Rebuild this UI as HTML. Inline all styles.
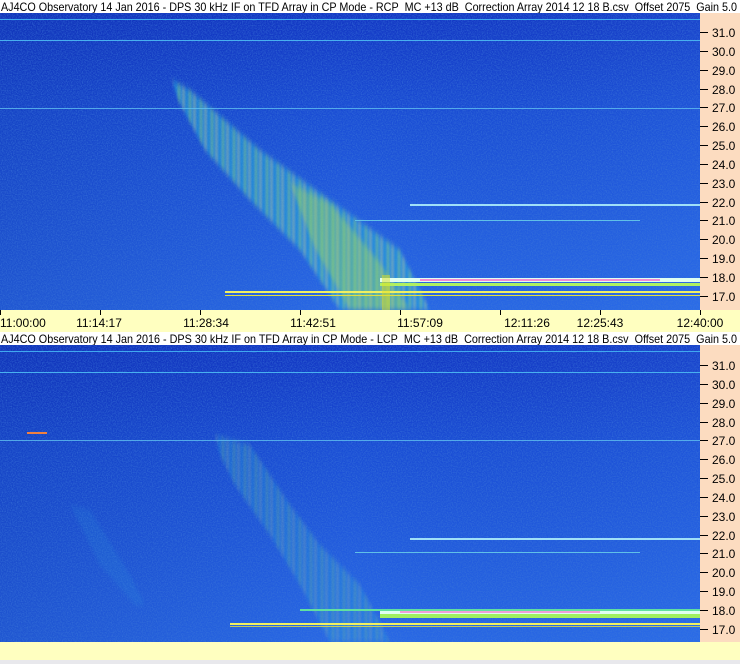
<!DOCTYPE html>
<html><head><meta charset="utf-8"><style>
html,body{margin:0;padding:0;width:740px;height:664px;overflow:hidden;background:#e8e8ec;font-family:"Liberation Sans",sans-serif}
svg{position:absolute;left:0;top:0;display:block}
</style></head><body>
<svg width="740" height="664">
<defs>
<linearGradient id="bg" x1="0" y1="0" x2="0" y2="1">
<stop offset="0" stop-color="#1236c4"/><stop offset="0.35" stop-color="#1a4ed6"/><stop offset="1" stop-color="#2868e6"/></linearGradient>
<linearGradient id="bgh" x1="0" y1="0" x2="1" y2="0">
<stop offset="0" stop-color="#0a2aa0" stop-opacity="0.3"/><stop offset="0.5" stop-color="#0a2aa0" stop-opacity="0"/><stop offset="1" stop-color="#3a80f0" stop-opacity="0.15"/></linearGradient>
<filter id="n" x="0" y="0" width="1" height="1"><feTurbulence type="fractalNoise" baseFrequency="0.8" numOctaves="2" seed="3"/><feColorMatrix values="0 0 0 0 0.05  0 0 0 0 0.2  0 0 0 0 0.7  0 0 0 1.2 -0.45"/></filter>
<pattern id="st" width="11" height="10" patternUnits="userSpaceOnUse"><rect width="11" height="10" fill="#28a8d8"/><rect x="2" width="2" height="10" fill="#80e070"/><rect x="7" width="1" height="10" fill="#c8f040"/></pattern>
<filter id="b"><feGaussianBlur stdDeviation="1 3"/></filter>
</defs>
<rect x="0" y="0" width="740" height="13" fill="#fff"/>
<text x="1" y="11" font-size="12" textLength="736" lengthAdjust="spacingAndGlyphs" font-family="Liberation Sans, sans-serif">AJ4CO Observatory 14 Jan 2016 - DPS 30 kHz IF on TFD Array in CP Mode - RCP&#160; MC +13 dB&#160; Correction Array 2014 12 18 B.csv&#160; Offset 2075&#160; Gain 5.0</text>
<rect x="0" y="332" width="740" height="13" fill="#fff"/>
<text x="1" y="343" font-size="12" textLength="736" lengthAdjust="spacingAndGlyphs" font-family="Liberation Sans, sans-serif">AJ4CO Observatory 14 Jan 2016 - DPS 30 kHz IF on TFD Array in CP Mode - LCP&#160; MC +13 dB&#160; Correction Array 2014 12 18 B.csv&#160; Offset 2075&#160; Gain 5.0</text>
<!-- panel 1 -->
<g transform="translate(0,13)">
<rect width="700" height="297" fill="url(#bg)"/><rect width="700" height="297" fill="url(#bgh)"/>
<rect width="700" height="297" filter="url(#n)"/>
<polygon points="172,67 190,77 260,137 330,187 400,237 430,297 340,297 300,237 250,187 205,137 178,87" fill="url(#st)" opacity="0.6" filter="url(#b)"/>
<polygon points="290,170 330,190 380,250 410,297 350,297 315,235" fill="#b8f040" opacity="0.3" filter="url(#b)"/>
<rect x="0" y="6" width="700" height="1" fill="#40a8f0"/>
<rect x="0" y="27" width="700" height="1" fill="#48b0f0"/>
<rect x="0" y="95" width="700" height="1" fill="#60c0f0" opacity="0.8"/>
<rect x="410" y="191" width="290" height="2" fill="#a0e0f8"/>
<rect x="355" y="207" width="285" height="1" fill="#60c0e8"/>
<rect x="380" y="265" width="320" height="4" fill="#e0fff0"/>
<rect x="420" y="266" width="240" height="2" fill="#ff40c0" opacity="0.6"/>
<rect x="380" y="270" width="320" height="3" fill="#b0f060"/>
<rect x="225" y="278" width="475" height="2" fill="#f0f060"/>
<rect x="225" y="282" width="475" height="1" fill="#e0e040"/>
<rect x="382" y="262" width="8" height="35" fill="#e0e020" opacity="0.5"/>
</g>
<!-- panel 2 -->
<g transform="translate(0,345)">
<rect width="700" height="297" fill="url(#bg)"/><rect width="700" height="297" fill="url(#bgh)"/>
<rect width="700" height="297" filter="url(#n)"/>
<polygon points="215,90 250,100 290,160 320,200 360,240 390,297 330,297 300,240 270,190 235,140 220,110" fill="url(#st)" opacity="0.3" filter="url(#b)"/>
<polygon points="70,160 90,165 130,230 145,260 135,260 100,220" fill="#30b0e0" opacity="0.12" filter="url(#b)"/>
<rect x="0" y="6" width="700" height="1" fill="#40a8f0"/>
<rect x="0" y="27" width="700" height="1" fill="#48b0f0"/>
<rect x="0" y="95" width="700" height="1" fill="#60c0f0" opacity="0.8"/>
<rect x="27" y="87" width="20" height="2" fill="#f08040"/>
<rect x="410" y="193" width="290" height="2" fill="#a0e0f8"/>
<rect x="355" y="207" width="285" height="1" fill="#60c0e8"/>
<rect x="300" y="264" width="400" height="2" fill="#60e0a0"/>
<rect x="380" y="266" width="320" height="3" fill="#e0fff0"/>
<rect x="400" y="266" width="200" height="2" fill="#ff40c0" opacity="0.5"/>
<rect x="380" y="269" width="320" height="4" fill="#a0f060"/>
<rect x="230" y="278" width="470" height="2" fill="#f0f060"/>
<rect x="230" y="281" width="470" height="1" fill="#e0e040" opacity="0.8"/>
</g>
<!-- axes -->
<rect x="700" y="13" width="40" height="297" fill="#fcdcc0"/>
<rect x="700" y="345" width="40" height="297" fill="#fcdcc0"/>
<rect x="0" y="310" width="740" height="22" fill="#ffffc0"/>
<rect x="0" y="642" width="740" height="18" fill="#ffffc0"/>
<g stroke="#000" stroke-width="1">
<line x1="0.5" y1="310" x2="0.5" y2="315"/><line x1="100.5" y1="310" x2="100.5" y2="315"/><line x1="200.5" y1="310" x2="200.5" y2="315"/><line x1="300.5" y1="310" x2="300.5" y2="315"/><line x1="400.5" y1="310" x2="400.5" y2="315"/><line x1="500.5" y1="310" x2="500.5" y2="315"/><line x1="600.5" y1="310" x2="600.5" y2="315"/><line x1="700.5" y1="310" x2="700.5" y2="315"/>
</g>
<g font-size="12" fill="#000" font-family="Liberation Sans, sans-serif">
<text x="0" y="327">11:00:00</text>
<text x="99" y="327" text-anchor="middle">11:14:17</text>
<text x="206" y="327" text-anchor="middle">11:28:34</text>
<text x="313" y="327" text-anchor="middle">11:42:51</text>
<text x="420" y="327" text-anchor="middle">11:57:09</text>
<text x="527" y="327" text-anchor="middle">12:11:26</text>
<text x="600" y="327" text-anchor="middle">12:25:43</text>
<text x="700" y="327" text-anchor="middle">12:40:00</text>
</g>
<g font-size="12" fill="#000" font-family="Liberation Sans, sans-serif">
<g>
<line x1="700" y1="32.5" x2="708" y2="32.5" stroke="#000"/><text x="712" y="37">31.0</text>
<line x1="700" y1="51.5" x2="708" y2="51.5" stroke="#000"/><text x="712" y="56">30.0</text>
<line x1="700" y1="70.5" x2="708" y2="70.5" stroke="#000"/><text x="712" y="75">29.0</text>
<line x1="700" y1="89.5" x2="708" y2="89.5" stroke="#000"/><text x="712" y="94">28.0</text>
<line x1="700" y1="107.5" x2="708" y2="107.5" stroke="#000"/><text x="712" y="112">27.0</text>
<line x1="700" y1="126.5" x2="708" y2="126.5" stroke="#000"/><text x="712" y="131">26.0</text>
<line x1="700" y1="145.5" x2="708" y2="145.5" stroke="#000"/><text x="712" y="150">25.0</text>
<line x1="700" y1="164.5" x2="708" y2="164.5" stroke="#000"/><text x="712" y="169">24.0</text>
<line x1="700" y1="183.5" x2="708" y2="183.5" stroke="#000"/><text x="712" y="188">23.0</text>
<line x1="700" y1="202.5" x2="708" y2="202.5" stroke="#000"/><text x="712" y="207">22.0</text>
<line x1="700" y1="220.5" x2="708" y2="220.5" stroke="#000"/><text x="712" y="225">21.0</text>
<line x1="700" y1="239.5" x2="708" y2="239.5" stroke="#000"/><text x="712" y="244">20.0</text>
<line x1="700" y1="258.5" x2="708" y2="258.5" stroke="#000"/><text x="712" y="263">19.0</text>
<line x1="700" y1="277.5" x2="708" y2="277.5" stroke="#000"/><text x="712" y="282">18.0</text>
<line x1="700" y1="296.5" x2="708" y2="296.5" stroke="#000"/><text x="712" y="301">17.0</text>
</g>
<g transform="translate(0,333)">
<line x1="700" y1="32.5" x2="708" y2="32.5" stroke="#000"/><text x="712" y="37">31.0</text>
<line x1="700" y1="51.5" x2="708" y2="51.5" stroke="#000"/><text x="712" y="56">30.0</text>
<line x1="700" y1="70.5" x2="708" y2="70.5" stroke="#000"/><text x="712" y="75">29.0</text>
<line x1="700" y1="89.5" x2="708" y2="89.5" stroke="#000"/><text x="712" y="94">28.0</text>
<line x1="700" y1="107.5" x2="708" y2="107.5" stroke="#000"/><text x="712" y="112">27.0</text>
<line x1="700" y1="126.5" x2="708" y2="126.5" stroke="#000"/><text x="712" y="131">26.0</text>
<line x1="700" y1="145.5" x2="708" y2="145.5" stroke="#000"/><text x="712" y="150">25.0</text>
<line x1="700" y1="164.5" x2="708" y2="164.5" stroke="#000"/><text x="712" y="169">24.0</text>
<line x1="700" y1="183.5" x2="708" y2="183.5" stroke="#000"/><text x="712" y="188">23.0</text>
<line x1="700" y1="202.5" x2="708" y2="202.5" stroke="#000"/><text x="712" y="207">22.0</text>
<line x1="700" y1="220.5" x2="708" y2="220.5" stroke="#000"/><text x="712" y="225">21.0</text>
<line x1="700" y1="239.5" x2="708" y2="239.5" stroke="#000"/><text x="712" y="244">20.0</text>
<line x1="700" y1="258.5" x2="708" y2="258.5" stroke="#000"/><text x="712" y="263">19.0</text>
<line x1="700" y1="277.5" x2="708" y2="277.5" stroke="#000"/><text x="712" y="282">18.0</text>
<line x1="700" y1="296.5" x2="708" y2="296.5" stroke="#000"/><text x="712" y="301">17.0</text>
</g>
</g>
</svg>
</body></html>
